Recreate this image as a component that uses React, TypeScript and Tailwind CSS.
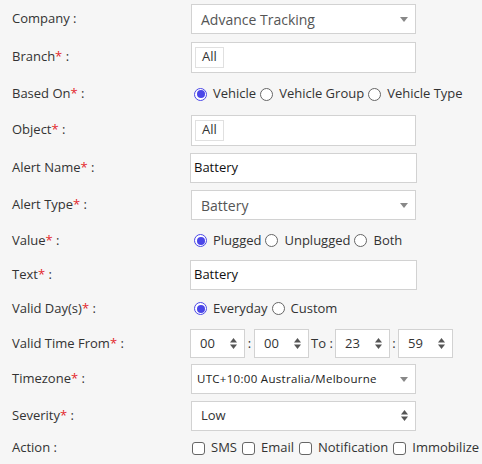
import React from 'react';

const font = { fontFamily: '"Open Sans", "Noto Sans", sans-serif' };

function Label({ text, required = true }: { text: string; required?: boolean }) {
  return (
    <div className="w-[191px] shrink-0 pl-3 text-[13px] text-[#333]">
      {text}
      {required && <span className="text-[#e3262b]">*</span>} :
    </div>
  );
}

function Caret() {
  return (
    <svg width="8" height="5" viewBox="0 0 8 5" className="shrink-0">
      <path d="M0 0 L8 0 L4 5 Z" fill="#888" />
    </svg>
  );
}

function Spinner() {
  return (
    <svg width="7" height="11" viewBox="0 0 7 11" className="shrink-0">
      <path d="M0 4.5 L7 4.5 L3.5 0 Z" fill="#555" />
      <path d="M0 6.5 L7 6.5 L3.5 11 Z" fill="#555" />
    </svg>
  );
}

function Radio({ checked, label }: { checked?: boolean; label: string }) {
  return (
    <label className="flex items-center gap-[6px] mr-[4px]">
      {checked ? (
        <span className="flex h-[13px] w-[13px] items-center justify-center rounded-full border border-[#4b47e8] bg-white">
          <span className="h-[8px] w-[8px] rounded-full bg-[#4b47e8]" />
        </span>
      ) : (
        <span className="h-[13px] w-[13px] rounded-full border border-[#666] bg-white" />
      )}
      <span className="text-[13px] text-[#333]">{label}</span>
    </label>
  );
}

function Check({ label }: { label: string }) {
  return (
    <label className="flex items-center gap-[6px] mr-[5px]">
      <span className="h-[13px] w-[13px] rounded-[3px] border border-[#666] bg-white" />
      <span className="text-[13px] text-[#333]">{label}</span>
    </label>
  );
}

function SelectBox({ value, spin, small }: { value: string; spin?: boolean; small?: boolean }) {
  return (
    <div
      className={`flex h-[30px] w-[225px] items-center justify-between border border-[#d2d2d2] bg-white pr-[7px] ${
        small ? 'pl-[5px]' : 'pl-[9px]'
      }`}
    >
      <span
        className={
          small
            ? 'text-[11.5px] tracking-[0.3px] text-[#222]'
            : spin
            ? 'text-[13px] text-[#333]'
            : 'text-[14px] text-[#555]'
        }
      >
        {value}
      </span>
      {spin ? <Spinner /> : <Caret />}
    </div>
  );
}

function TagBox() {
  return (
    <div className="flex h-[31px] w-[225px] items-center border border-[#d2d2d2] bg-white pl-[3px]">
      <span className="flex h-[21px] items-center border border-[#e0e0e0] px-[6px] text-[13px] text-[#333]">All</span>
    </div>
  );
}

function TextBox({ value }: { value: string }) {
  return (
    <div className="-ml-px flex h-[30px] w-[227px] items-center border border-[#d2d2d2] bg-white pl-[3px] text-[13px] text-[#111]">
      {value}
    </div>
  );
}

function TimeBox({ value }: { value: string }) {
  return (
    <div className="flex h-[29px] w-[55px] items-center justify-between border border-[#d2d2d2] bg-white pl-[9px] pr-[7px] text-[13px] text-[#333]">
      {value}
      <Spinner />
    </div>
  );
}

export default function App() {
  return (
    <div className="h-[464px] w-[482px] overflow-hidden bg-[#f6f6f6]" style={font}>
      <div className="flex h-[38px] items-center">
        <Label text="Company" required={false} />
        <SelectBox value="Advance Tracking" />
      </div>
      <div className="flex h-[38px] items-center">
        <Label text="Branch" />
        <TagBox />
      </div>
      <div className="flex h-[36px] items-center">
        <Label text="Based On" />
        <div className="flex items-center pl-[3px]">
          <Radio checked label="Vehicle" />
          <Radio label="Vehicle Group" />
          <Radio label="Vehicle Type" />
        </div>
      </div>
      <div className="flex h-[36px] items-center">
        <Label text="Object" />
        <TagBox />
      </div>
      <div className="flex h-[39px] items-center">
        <Label text="Alert Name" />
        <TextBox value="Battery" />
      </div>
      <div className="flex h-[36px] items-center">
        <Label text="Alert Type" />
        <SelectBox value="Battery" />
      </div>
      <div className="flex h-[35px] items-center">
        <Label text="Value" />
        <div className="flex items-center pl-[3px]">
          <Radio checked label="Plugged" />
          <Radio label="Unplugged" />
          <Radio label="Both" />
        </div>
      </div>
      <div className="flex h-[33px] items-center">
        <Label text="Text" />
        <TextBox value="Battery" />
      </div>
      <div className="flex h-[35px] items-center">
        <Label text="Valid Day(s)" />
        <div className="flex items-center pl-[3px]">
          <Radio checked label="Everyday" />
          <Radio label="Custom" />
        </div>
      </div>
      <div className="flex h-[35px] items-center">
        <Label text="Valid Time From" />
        <div className="-ml-px flex items-center text-[13px] text-[#333]">
          <TimeBox value="00" />
          <span className="w-[9px] text-center">:</span>
          <TimeBox value="00" />
          <span className="w-[26px] text-center">To :</span>
          <TimeBox value="23" />
          <span className="w-[8px] text-center">:</span>
          <TimeBox value="59" />
        </div>
      </div>
      <div className="flex h-[36px] items-center">
        <Label text="Timezone" />
        <SelectBox value="UTC+10:00 Australia/Melbourne" small />
      </div>
      <div className="flex h-[37px] items-center">
        <Label text="Severity" />
        <SelectBox value="Low" spin />
      </div>
      <div className="flex h-[28px] items-center">
        <Label text="Action" required={false} />
        <div className="flex items-center pl-[1px]">
          <Check label="SMS" />
          <Check label="Email" />
          <Check label="Notification" />
          <Check label="Immobilize" />
        </div>
      </div>
    </div>
  );
}
